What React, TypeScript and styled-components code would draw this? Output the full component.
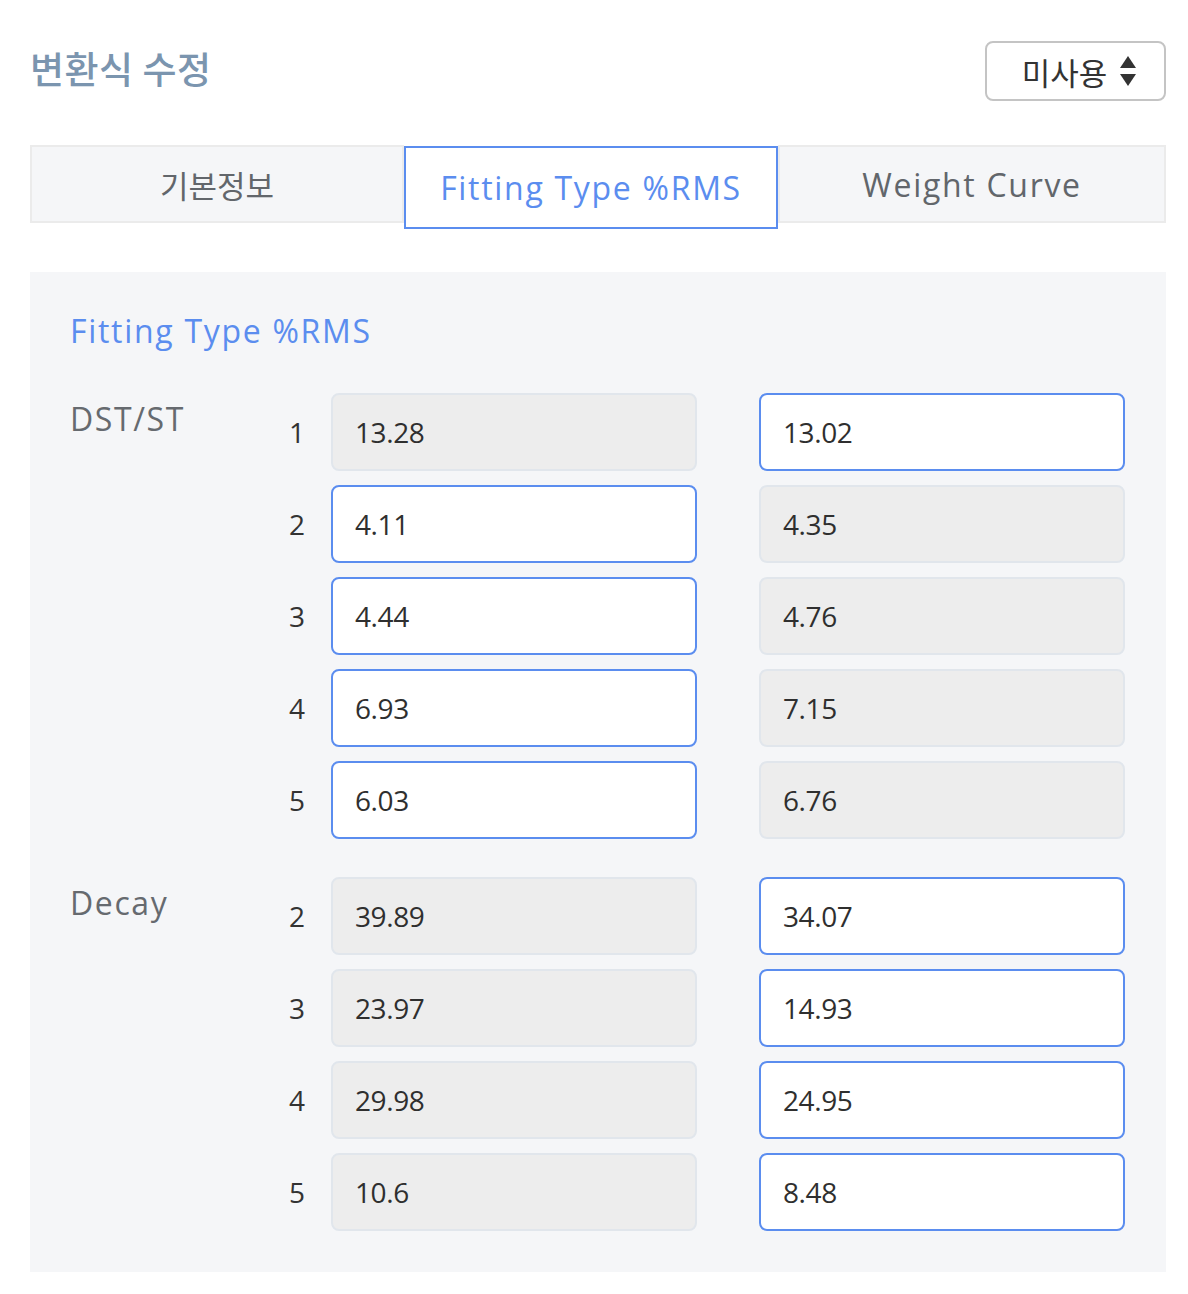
import React from "react";
import styled, { createGlobalStyle } from "styled-components";

const GlobalStyle = createGlobalStyle`
  body {
    margin: 0;
    background: #ffffff;
    font-family: "Open Sans", "Noto Sans CJK KR", sans-serif;
  }
  * {
    box-sizing: border-box;
  }
`;

interface FieldRow {
  num: number;
  left: string;
  right: string;
  active: "left" | "right";
}

interface Group {
  label: string;
  rows: FieldRow[];
}

const groups: Group[] = [
  {
    label: "DST/ST",
    rows: [
      { num: 1, left: "13.28", right: "13.02", active: "right" },
      { num: 2, left: "4.11", right: "4.35", active: "left" },
      { num: 3, left: "4.44", right: "4.76", active: "left" },
      { num: 4, left: "6.93", right: "7.15", active: "left" },
      { num: 5, left: "6.03", right: "6.76", active: "left" },
    ],
  },
  {
    label: "Decay",
    rows: [
      { num: 2, left: "39.89", right: "34.07", active: "right" },
      { num: 3, left: "23.97", right: "14.93", active: "right" },
      { num: 4, left: "29.98", right: "24.95", active: "right" },
      { num: 5, left: "10.6", right: "8.48", active: "right" },
    ],
  },
];

const tabs = [
  { label: "기본정보", korean: true },
  { label: "Fitting Type %RMS", korean: false },
  { label: "Weight Curve", korean: false },
];

const SortIcon = () => (
  <svg width="18" height="32" viewBox="0 0 18 32">
    <path d="M9 1 L17 13 L1 13 Z" fill="#333" />
    <path d="M1 19 L17 19 L9 31 Z" fill="#333" />
  </svg>
);

const App = () => {
  const activeTab = 1;
  return (
    <>
      <GlobalStyle />
      <Page>
        <Header>
          <Title>변환식 수정</Title>
          <SelectBox>
            <span>미사용</span>
            <SortIcon />
          </SelectBox>
        </Header>

        <TabBar>
          {tabs.map((t, i) => (
            <Tab
              key={t.label}
              $active={i === activeTab}
              $last={i === tabs.length - 1}
              $korean={t.korean}
            >
              {t.label}
            </Tab>
          ))}
        </TabBar>

        <Panel>
          <PanelTitle>Fitting Type %RMS</PanelTitle>
          {groups.map((g) => (
            <GroupBlock key={g.label}>
              <GroupLabel>{g.label}</GroupLabel>
              <Rows>
                {g.rows.map((r) => (
                  <Row key={g.label + r.num}>
                    <Num>{r.num}</Num>
                    <Pair>
                      <Field $active={r.active === "left"}>{r.left}</Field>
                      <Field $active={r.active === "right"}>{r.right}</Field>
                    </Pair>
                  </Row>
                ))}
              </Rows>
            </GroupBlock>
          ))}
        </Panel>
      </Page>
    </>
  );
};

export default App;

const Page = styled.div`
  padding: 0 22px 22px 30px;
`;

const Header = styled.div`
  display: flex;
  align-items: center;
  justify-content: space-between;
  padding-top: 41px;
  height: 101px;
`;

const Title = styled.h1`
  margin: 0 0 7px;
  font-family: "Noto Sans CJK KR", sans-serif;
  font-size: 37px;
  font-weight: 500;
  color: #7b95af;
  letter-spacing: 0.5px;
`;

const SelectBox = styled.div`
  width: 181px;
  height: 60px;
  border: 2px solid #c4c4c4;
  border-radius: 8px;
  display: flex;
  align-items: center;
  justify-content: center;
  gap: 12px;
  padding-left: 8px;
  font-family: "Noto Sans CJK KR", sans-serif;
  font-size: 31px;
  color: #333;
`;

const TabBar = styled.div`
  display: flex;
  align-items: flex-start;
  margin-top: 44px;
  height: 78px;
`;

const Tab = styled.div<{ $active: boolean; $last: boolean; $korean: boolean }>`
  flex: ${(p) => (p.$last ? "1" : "0 0 374px")};
  height: ${(p) => (p.$active ? "83px" : "78px")};
  margin-top: ${(p) => (p.$active ? "1px" : "0")};
  display: flex;
  align-items: center;
  justify-content: center;
  background: ${(p) => (p.$active ? "#ffffff" : "#f5f6f8")};
  border: 2px solid ${(p) => (p.$active ? "#5b8def" : "#ebebeb")};
  color: ${(p) => (p.$active ? "#5b8def" : "#62666b")};
  font-family: ${(p) =>
    p.$korean ? `"Noto Sans CJK KR", sans-serif` : `"Open Sans", "Noto Sans CJK KR", sans-serif`};
  font-size: ${(p) => (p.$korean ? "31px" : "32px")};
  font-weight: ${(p) => (p.$korean ? 400 : 500)};
  letter-spacing: ${(p) => (p.$korean ? "0" : "1.7px")};
  position: relative;
  z-index: ${(p) => (p.$active ? 1 : 0)};
`;

const Panel = styled.div`
  margin-top: 49px;
  background: #f5f6f8;
  padding: 37px 41px 41px 40px;
`;

const PanelTitle = styled.h2`
  margin: 0 0 40px;
  height: 44px;
  font-size: 32px;
  font-weight: 500;
  letter-spacing: 1.7px;
  color: #5b8def;
`;

const GroupBlock = styled.div`
  display: flex;
  & + & {
    margin-top: 38px;
  }
`;

const GroupLabel = styled.div`
  width: 200px;
  padding-top: 4px;
  font-size: 32px;
  font-weight: 500;
  letter-spacing: 1.6px;
  color: #666a6f;
`;

const Rows = styled.div`
  flex: 1;
  display: flex;
  flex-direction: column;
  gap: 14px;
`;

const Row = styled.div`
  display: flex;
  align-items: center;
`;

const Num = styled.div`
  width: 35px;
  margin-right: 26px;
  text-align: right;
  font-size: 28px;
  color: #333;
`;

const Pair = styled.div`
  display: grid;
  grid-template-columns: 366px 366px;
  column-gap: 62px;
`;

const Field = styled.div<{ $active: boolean }>`
  height: 78px;
  display: flex;
  align-items: center;
  padding-left: 22px;
  border-radius: 8px;
  font-size: 28px;
  letter-spacing: -0.4px;
  color: #2f2f2f;
  background: ${(p) => (p.$active ? "#ffffff" : "#ededed")};
  border: 2px solid ${(p) => (p.$active ? "#5b8def" : "#e1e6ec")};
`;
